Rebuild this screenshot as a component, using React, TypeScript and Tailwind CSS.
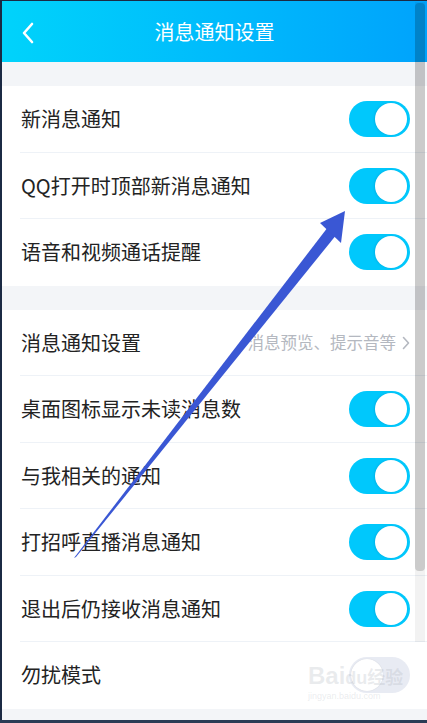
import React from "react";

const font = { fontFamily: '"Noto Sans CJK SC", "Noto Sans", sans-serif' };

function Toggle({ on = true }: { on?: boolean }) {
  if (!on) {
    return (
      <div className="relative h-[36px] w-[61px] shrink-0 rounded-full bg-[#e8ebf3]">
        <div className="absolute left-[2px] top-[2px] h-[32px] w-[32px] rounded-full bg-white shadow-[0_0_1px_rgba(0,0,0,0.15)]" />
      </div>
    );
  }
  return (
    <div className="relative h-[36px] w-[61px] shrink-0 rounded-full bg-[#00c8fc]">
      <div className="absolute right-[3px] top-[2px] h-[32px] w-[32px] rounded-full bg-white shadow-[-1px_0_2px_rgba(0,120,170,0.25)]" />
    </div>
  );
}

function Row({ label, last, children }: { label: string; last?: boolean; children: React.ReactNode }) {
  return (
    <div className="relative flex h-[66.5px] items-center justify-between bg-white pl-[19px] pr-[17px]">
      <span className="text-[20px] text-[#232323]">{label}</span>
      {children}
      {!last && <div className="absolute bottom-0 left-[18px] right-0 h-px bg-[#eef2f7]" />}
    </div>
  );
}

export default function App() {
  return (
    <div className="relative h-[723px] w-[427px] overflow-hidden bg-[#f3f5f8]" style={font}>
      <div className="flex h-[720px] flex-col border-l-2 border-t border-[#1b2a44]">
        {/* header */}
        <div className="relative flex h-[61px] shrink-0 items-center justify-center bg-gradient-to-r from-[#00d3fb] to-[#00a3fc]">
          <svg className="absolute left-[19px] top-[21px]" width="14" height="22" viewBox="0 0 14 22">
            <path d="M11 2 L3 11 L11 20" fill="none" stroke="white" strokeWidth="2.6" strokeLinecap="round" strokeLinejoin="round" />
          </svg>
          <span className="text-[20px] text-white">消息通知设置</span>
        </div>
        <div className="h-[24px] shrink-0 bg-[#f3f5f8]" />
        <div className="flex flex-col">
          <Row label="新消息通知"><Toggle /></Row>
          <Row label="QQ打开时顶部新消息通知"><Toggle /></Row>
          <Row label="语音和视频通话提醒" last><Toggle /></Row>
        </div>
        <div className="h-[24px] shrink-0 bg-[#f3f5f8]" />
        <div className="flex flex-col">
          <Row label="消息通知设置">
            <div className="flex items-center gap-[6px] text-[#b4b8c0]">
              <span className="text-[16.5px]">消息预览、提示音等</span>
              <svg width="8" height="14" viewBox="0 0 8 14">
                <path d="M1.5 1.5 L6.5 7 L1.5 12.5" fill="none" stroke="#b4b8c0" strokeWidth="1.6" strokeLinecap="round" strokeLinejoin="round" />
              </svg>
            </div>
          </Row>
          <Row label="桌面图标显示未读消息数"><Toggle /></Row>
          <Row label="与我相关的通知"><Toggle /></Row>
          <Row label="打招呼直播消息通知"><Toggle /></Row>
          <Row label="退出后仍接收消息通知"><Toggle /></Row>
          <Row label="勿扰模式" last><Toggle on={false} /></Row>
        </div>
        <div className="flex-1 bg-[#f3f5f8]" />
      </div>
      <div className="h-[3px] bg-[#2a3b55]" />

      {/* scrollbar */}
      <div className="absolute right-[2px] top-[2px] h-[640px] w-[10px] bg-[rgba(0,0,0,0.05)]" />
      <div className="absolute right-[2px] top-[3px] h-[568px] w-[10px] rounded-[4px] bg-[rgba(0,0,0,0.16)]" />

      {/* watermark */}
      <div className="pointer-events-none absolute left-[308px] top-[664px] flex flex-col items-start text-[rgba(170,175,185,0.25)]">
        <span className="text-[24px] font-bold leading-none" style={{ fontFamily: '"Liberation Sans", sans-serif' }}>Bai<span className="text-[18px]">du</span><span className="text-[18px]" style={font}>经验</span></span>
        <span className="mt-[4px] text-[9px] leading-none" style={{ fontFamily: '"Liberation Sans", sans-serif' }}>jingyan.baidu.com</span>
      </div>

      {/* annotation arrow */}
      <svg className="pointer-events-none absolute left-0 top-0" width="427" height="723" viewBox="0 0 427 723">
        <polygon points="74,558 76,557 337,234 328,227" fill="#3a57d4" />
        <polygon points="345,211 320,223 341,243" fill="#3a57d4" />
      </svg>
    </div>
  );
}
